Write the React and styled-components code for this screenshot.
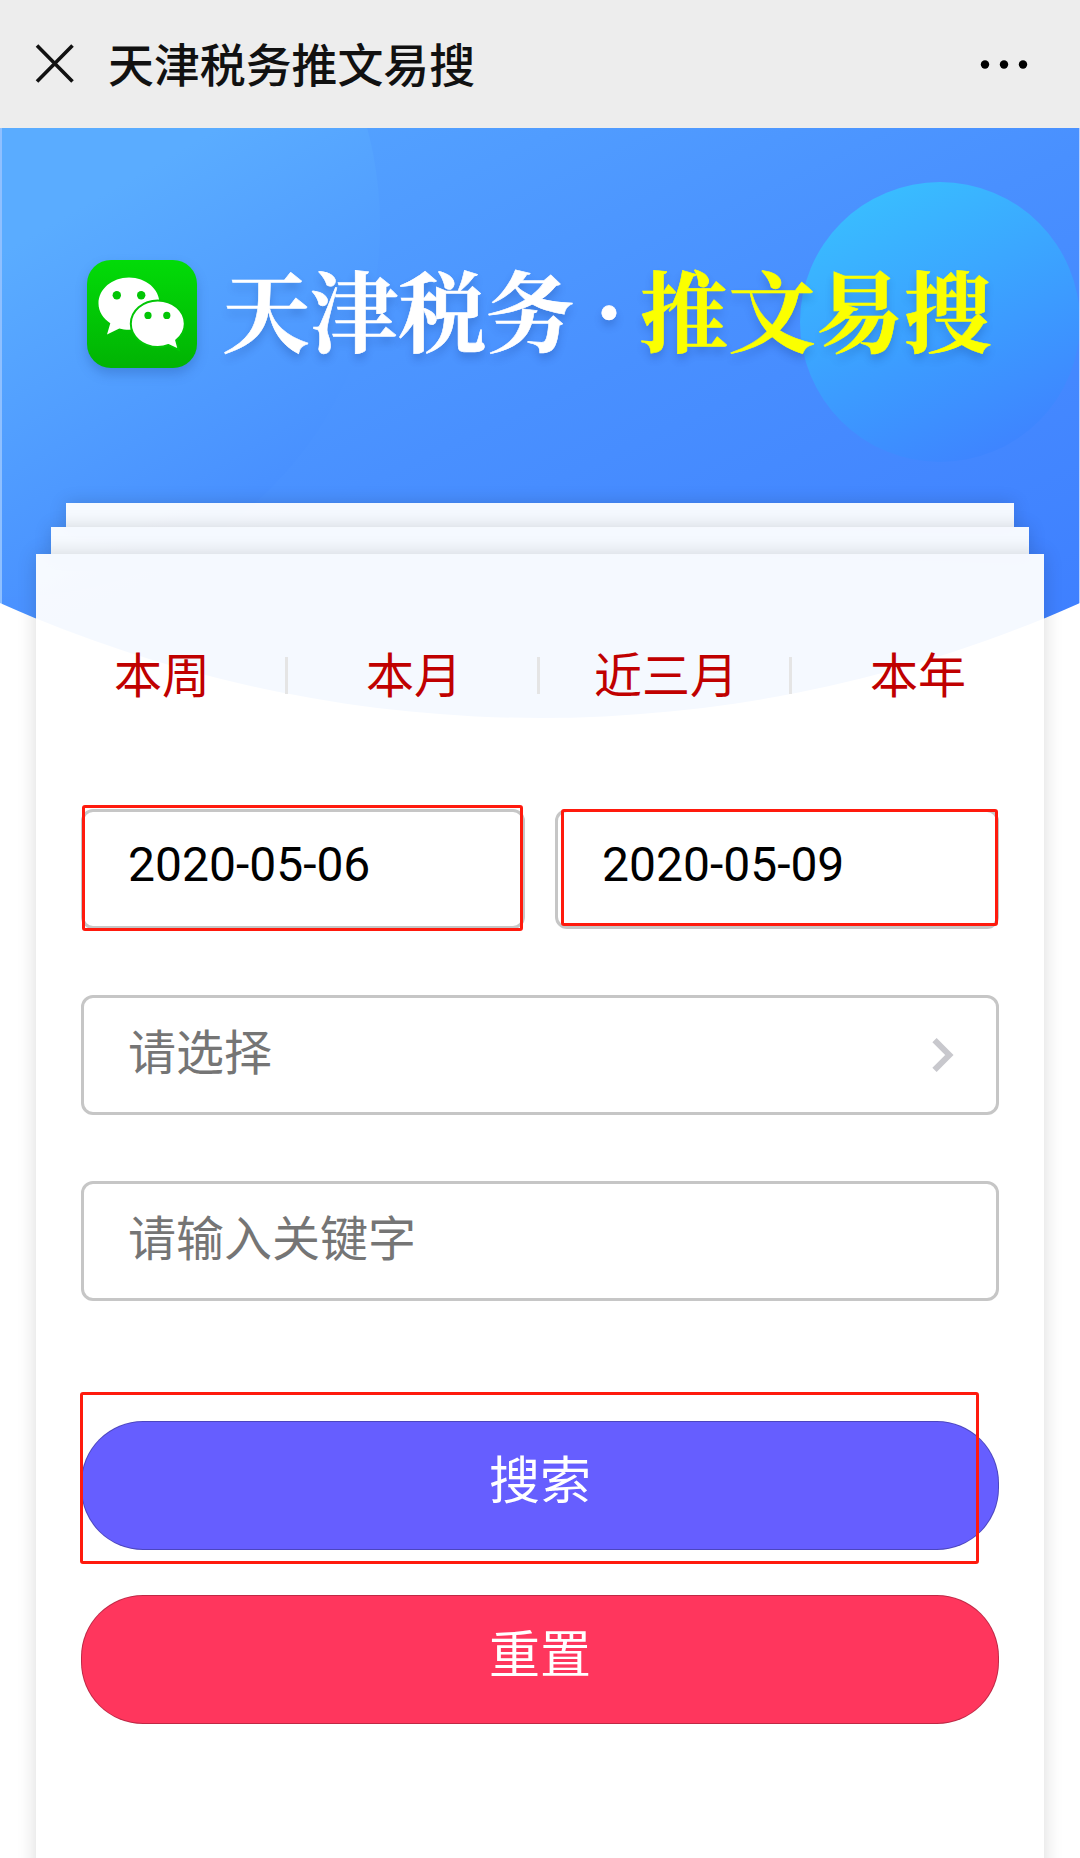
import React, { useState } from 'react'
import styled, { createGlobalStyle } from 'styled-components'

const GlobalStyle = createGlobalStyle`
  *{
    box-sizing: border-box;
  }
  body{
    margin: 0;
    background: #fff;
    font-family: Roboto, "Noto Sans CJK SC", sans-serif;
  }
`

const Page = styled.div`
  display: flex;
  flex-direction: column;
  width: 1080px;
  height: 1858px;
  overflow: hidden;
  background: #fff;
`

const NavBar = styled.header`
  display: flex;
  align-items: center;
  flex: none;
  height: 128px;
  padding: 0 52px 0 35px;
  background: #ededed;
  h1{
    flex: 1;
    margin: -4px 0 0 33px;
    font-family: "Noto Sans CJK SC", sans-serif;
    font-size: 45.9px;
    font-weight: 500;
    line-height: 64px;
    color: #111;
  }
`

const Hero = styled.section`
  position: relative;
  flex: none;
  height: 590px;
  overflow: hidden;
  background: linear-gradient(155deg, #57a8ff 0%, #4990ff 48%, #3c7cff 100%);
  clip-path: circle(1325px at 540px -735px);
  border-left: 2px solid #8fc0ff;
  border-right: 1px solid #b4ceff;
`

const Bubble = styled.i`
  position: absolute;
  left: ${({ $x }) => $x}px;
  top: ${({ $y }) => $y}px;
  width: ${({ $size }) => $size}px;
  height: ${({ $size }) => $size}px;
  border-radius: 50%;
  background: ${({ $fill }) => $fill};
`

const Brand = styled.div`
  position: relative;
  display: flex;
  align-items: flex-start;
  padding: 132px 0 0 85px;
  svg{
    flex: none;
    filter: drop-shadow(0 6px 6px rgba(0,30,100,.2));
  }
`

const BrandText = styled.div`
  display: flex;
  margin: -17px 0 0 25px;
  font-family: "Noto Serif CJK SC", "Noto Sans CJK SC", serif;
  font-size: 88px;
  font-weight: 700;
  line-height: 128px;
  color: #fff;
  text-shadow: 0 6px 8px rgba(0,30,100,.2);
  -webkit-text-stroke: .6px currentColor;
  span{
    width: 66px;
    padding-left: 4px;
    text-align: center;
  }
  em{
    font-style: normal;
    color: #fbff00;
  }
`

const Stack = styled.main`
  position: relative;
  display: flex;
  flex: 1;
  flex-direction: column;
  align-items: center;
  margin: -215px 0 -40px;
`

const Sheet = styled.div`
  flex: none;
  width: ${({ $width }) => $width}px;
  height: ${({ $height }) => $height}px;
  background: rgba(255,255,255,.95);
  box-shadow: 0 0 18px rgba(0,0,0,.15);
`

const Card = styled.div`
  position: relative;
  flex: 1;
  width: 1008px;
  padding-top: 84px;
  background: rgba(255,255,255,.95);
  box-shadow: 0 0 18px rgba(0,0,0,.15);
`

const Tabs = styled.nav`
  display: grid;
  grid-template-columns: repeat(4, 1fr);
  height: 76px;
  font-size: 48px;
  line-height: 72px;
`

const Tab = styled.a`
  display: flex;
  align-items: center;
  color: #c00000;
  cursor: pointer;
  span{
    flex: 1;
    padding: 1px 0 0 3px;
    text-align: center;
  }
  &:last-child span{
    padding-left: 0;
  }
  &:not(:last-child)::after{
    content: '';
    width: 3px;
    height: 37px;
    margin-top: -1px;
    background: #e5e5e5;
  }
`

const Form = styled.div`
  display: flex;
  flex-direction: column;
  padding: 95px 45px 0;
`

const Row = styled.div`
  display: grid;
  grid-template-columns: ${({ $columns }) => `repeat(${$columns}, 1fr)`};
  column-gap: 30px;
  margin-bottom: 66px;
`

const Field = styled.div`
  position: relative;
  display: flex;
  align-items: center;
  justify-content: space-between;
  height: 120px;
  padding: 0 42px 0 44px;
  border: 3px solid #c6c6c6;
  border-radius: 12px;
  font-size: 48px;
  line-height: 72px;
  color: ${({ $empty }) => ($empty ? '#757575' : '#000')};
  span{
    margin-top: ${({ $empty }) => ($empty ? '-2px' : '-9px')};
  }
`

const Actions = styled.div`
  display: flex;
  flex-direction: column;
  gap: 45px;
  margin-top: 54px;
`

const Button = styled.button`
  position: relative;
  height: 129px;
  padding: 0 0 7px;
  border: 1px solid rgba(0,0,0,.25);
  border-radius: 62px;
  background: ${({ $danger }) => ($danger ? '#ff365d' : '#665eff')};
  font-family: inherit;
  font-size: 51px;
  line-height: 76px;
  color: #fff;
`

// red highlight frame, drawn over the element it sits in
const Mark = styled.i`
  position: absolute;
  top: ${({ $top }) => $top}px;
  left: ${({ $left }) => $left}px;
  width: ${({ $width }) => $width}px;
  height: ${({ $height }) => $height}px;
  border: 3px solid #ff1a0d;
  border-radius: 3px;
  pointer-events: none;
`

const CloseIcon = () => (
  <svg width="40" height="42" viewBox="0 0 40 42" fill="none" stroke="#111" strokeWidth="3.6">
    <path d="M2 2.500 37.500 38.500M37.500 2.500 2 38.500" />
  </svg>
)

const MoreIcon = () => (
  <svg width="48" height="10" viewBox="0 0 48 10">
    <circle cx="5" cy="5.500" r="4.200" />
    <circle cx="24" cy="5.500" r="4.200" />
    <circle cx="43" cy="5.500" r="4.200" />
  </svg>
)

const WechatLogo = () => (
  <svg width="110" height="108" viewBox="0 0 110 108">
    <defs>
      <linearGradient id="wechat" x1="0" y1="0" x2="0" y2="1">
        <stop offset="0" stopColor="#02db08" />
        <stop offset="1" stopColor="#01b303" />
      </linearGradient>
    </defs>
    <rect width="110" height="108" rx="24" fill="url(#wechat)" />
    <g fill="#fff">
      <path d="M42 17.500c17 0 30.500 11.600 30.500 26S59 69.700 42 69.700c-3.500 0-6.700-.5-9.700-1.300L20 74.500l3.300-11.300C16 58.500 11.500 51.500 11.500 43.500c0-14.400 13.500-26 30.500-26z" />
      <path stroke="#02c606" strokeWidth="2" d="M70.800 40.500c15 0 27 10.400 27 23.300 0 6.700-3.300 12.300-8.600 16.500l2.600 9.700-10.300-5c-3.300 1.300-6.900 2-10.700 2-15 0-27-10.400-27-23.200s12-23.300 27-23.300z" />
    </g>
    <g fill="#02c506">
      <circle cx="29.800" cy="35.200" r="4.200" />
      <circle cx="54.200" cy="35.200" r="4.200" />
      <circle cx="61" cy="55.400" r="3.600" />
      <circle cx="79.800" cy="55.400" r="3.600" />
    </g>
  </svg>
)

const ArrowIcon = () => (
  <svg width="22" height="36" viewBox="0 0 22 36" fill="none" stroke="#c8c8cd" strokeWidth="6">
    <path d="M2.500 3.200 17.300 18 2.500 32.800" />
  </svg>
)

const ranges = ['本周', '本月', '近三月', '本年']

export default function App() {
  const [start] = useState('2020-05-06')
  const [end] = useState('2020-05-09')

  return (
    <>
      <GlobalStyle />
      <Page>
        <NavBar>
          <CloseIcon />
          <h1>天津税务推文易搜</h1>
          <MoreIcon />
        </NavBar>

        <Hero>
          <Bubble $x={-366} $y={-275} $size={744} $fill="linear-gradient(150deg, #5aacff 52%, #4489ff 94%)" />
          <Bubble $x={798} $y={54} $size={280} $fill="linear-gradient(155deg, #39bfff 8%, #3e83ff 90%)" />
          <Brand>
            <WechatLogo />
            <BrandText>
              天津税务<span>·</span><em>推文易搜</em>
            </BrandText>
          </Brand>
        </Hero>

        <Stack>
          <Sheet $width={948} $height={24} />
          <Sheet $width={978} $height={27} />
          <Card>
            <Tabs>
              {ranges.map(range => <Tab key={range}><span>{range}</span></Tab>)}
            </Tabs>

            <Form>
              <Row $columns={2}>
                <Field>
                  <span>{start}</span>
                  <Mark $top={-7} $left={-2} $width={441} $height={126} />
                </Field>
                <Field>
                  <span>{end}</span>
                  <Mark $top={-3} $left={3} $width={437} $height={117} />
                </Field>
              </Row>
              <Row $columns={1}>
                <Field $empty>
                  <span>请选择</span>
                  <ArrowIcon />
                </Field>
              </Row>
              <Row $columns={1}>
                <Field $empty>
                  <span>请输入关键字</span>
                </Field>
              </Row>
              <Actions>
                <Button>
                  搜索
                  <Mark $top={-30} $left={-2} $width={899} $height={172} />
                </Button>
                <Button $danger>重置</Button>
              </Actions>
            </Form>
          </Card>
        </Stack>
      </Page>
    </>
  )
}
